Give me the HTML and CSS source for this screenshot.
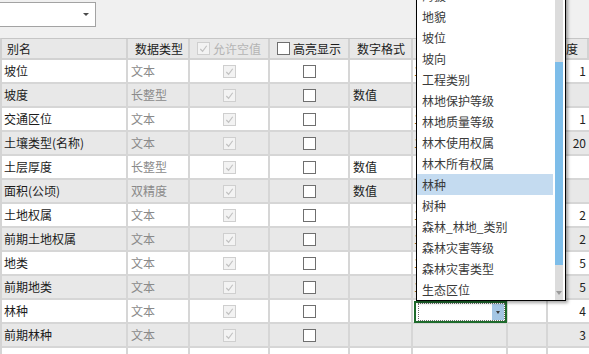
FILE: index.html
```html
<!DOCTYPE html>
<html lang="zh-CN">
<head>
<meta charset="utf-8">
<title>字段设置</title>
<link rel="stylesheet" href="styles.css">
</head>
<body>
<div class="page">
  <div class="toolbar">
    <div class="combo"><span class="combo-arrow"></span></div>
  </div>

  <div class="grid">
    <div class="row head">
      <div class="c">别名</div>
      <div class="c">数据类型</div>
      <div class="c chk-head disabled"><span class="cb cb-dis on"><svg viewBox="0 0 12 12"><polyline points="2.5,6.5 5,9 9.5,3"/></svg></span>允许空值</div>
      <div class="c chk-head"><span class="cb"></span>高亮显示</div>
      <div class="c">数字格式</div>
      <div class="c"></div>
      <div class="c"></div>
      <div class="c last-h">长度</div>
    </div>

    <div class="row white">
      <div class="c name">坡位</div><div class="c type">文本</div>
      <div class="c mid"><span class="cb cb-dis on"><svg viewBox="0 0 12 12"><polyline points="2.5,6.5 5,9 9.5,3"/></svg></span></div>
      <div class="c mid"><span class="cb"></span></div>
      <div class="c"></div><div class="c hid">1</div><div class="c"></div><div class="c num">1</div>
    </div>
    <div class="row gray">
      <div class="c name">坡度</div><div class="c type">长整型</div>
      <div class="c mid"><span class="cb cb-dis on"><svg viewBox="0 0 12 12"><polyline points="2.5,6.5 5,9 9.5,3"/></svg></span></div>
      <div class="c mid"><span class="cb"></span></div>
      <div class="c fmt">数值</div><div class="c hid"></div><div class="c"></div><div class="c num"></div>
    </div>
    <div class="row white">
      <div class="c name">交通区位</div><div class="c type">文本</div>
      <div class="c mid"><span class="cb cb-dis on"><svg viewBox="0 0 12 12"><polyline points="2.5,6.5 5,9 9.5,3"/></svg></span></div>
      <div class="c mid"><span class="cb"></span></div>
      <div class="c"></div><div class="c hid">1</div><div class="c"></div><div class="c num">1</div>
    </div>
    <div class="row gray">
      <div class="c name">土壤类型(名称)</div><div class="c type">文本</div>
      <div class="c mid"><span class="cb cb-dis on"><svg viewBox="0 0 12 12"><polyline points="2.5,6.5 5,9 9.5,3"/></svg></span></div>
      <div class="c mid"><span class="cb"></span></div>
      <div class="c"></div><div class="c hid">1</div><div class="c"></div><div class="c num">20</div>
    </div>
    <div class="row white">
      <div class="c name">土层厚度</div><div class="c type">长整型</div>
      <div class="c mid"><span class="cb cb-dis on"><svg viewBox="0 0 12 12"><polyline points="2.5,6.5 5,9 9.5,3"/></svg></span></div>
      <div class="c mid"><span class="cb"></span></div>
      <div class="c fmt">数值</div><div class="c hid"></div><div class="c"></div><div class="c num"></div>
    </div>
    <div class="row gray">
      <div class="c name">面积(公顷)</div><div class="c type">双精度</div>
      <div class="c mid"><span class="cb cb-dis on"><svg viewBox="0 0 12 12"><polyline points="2.5,6.5 5,9 9.5,3"/></svg></span></div>
      <div class="c mid"><span class="cb"></span></div>
      <div class="c fmt">数值</div><div class="c hid"></div><div class="c"></div><div class="c num"></div>
    </div>
    <div class="row white">
      <div class="c name">土地权属</div><div class="c type">文本</div>
      <div class="c mid"><span class="cb cb-dis on"><svg viewBox="0 0 12 12"><polyline points="2.5,6.5 5,9 9.5,3"/></svg></span></div>
      <div class="c mid"><span class="cb"></span></div>
      <div class="c"></div><div class="c hid">1</div><div class="c"></div><div class="c num">2</div>
    </div>
    <div class="row gray">
      <div class="c name">前期土地权属</div><div class="c type">文本</div>
      <div class="c mid"><span class="cb cb-dis on"><svg viewBox="0 0 12 12"><polyline points="2.5,6.5 5,9 9.5,3"/></svg></span></div>
      <div class="c mid"><span class="cb"></span></div>
      <div class="c"></div><div class="c hid">1</div><div class="c"></div><div class="c num">2</div>
    </div>
    <div class="row white">
      <div class="c name">地类</div><div class="c type">文本</div>
      <div class="c mid"><span class="cb cb-dis on"><svg viewBox="0 0 12 12"><polyline points="2.5,6.5 5,9 9.5,3"/></svg></span></div>
      <div class="c mid"><span class="cb"></span></div>
      <div class="c"></div><div class="c hid">1</div><div class="c"></div><div class="c num">5</div>
    </div>
    <div class="row gray">
      <div class="c name">前期地类</div><div class="c type">文本</div>
      <div class="c mid"><span class="cb cb-dis on"><svg viewBox="0 0 12 12"><polyline points="2.5,6.5 5,9 9.5,3"/></svg></span></div>
      <div class="c mid"><span class="cb"></span></div>
      <div class="c"></div><div class="c hid">1</div><div class="c"></div><div class="c num">5</div>
    </div>
    <div class="row white">
      <div class="c name">林种</div><div class="c type">文本</div>
      <div class="c mid"><span class="cb cb-dis on"><svg viewBox="0 0 12 12"><polyline points="2.5,6.5 5,9 9.5,3"/></svg></span></div>
      <div class="c mid"><span class="cb"></span></div>
      <div class="c"></div>
      <div class="c edit-cell">
        <div class="editor"><div class="editor-inner"><span class="editor-btn"><span class="tri"></span></span></div></div>
      </div>
      <div class="c"></div><div class="c num">4</div>
    </div>
    <div class="row gray">
      <div class="c name">前期林种</div><div class="c type">文本</div>
      <div class="c mid"><span class="cb cb-dis on"><svg viewBox="0 0 12 12"><polyline points="2.5,6.5 5,9 9.5,3"/></svg></span></div>
      <div class="c mid"><span class="cb"></span></div>
      <div class="c"></div><div class="c hid"></div><div class="c"></div><div class="c num">3</div>
    </div>
    <div class="row white">
      <div class="c name"></div><div class="c type"></div><div class="c"></div><div class="c"></div>
      <div class="c"></div><div class="c"></div><div class="c"></div><div class="c"></div>
    </div>
  </div>

  <div class="dropdown">
    <ul class="list">
      <li>海拔</li>
      <li>地貌</li>
      <li>坡位</li>
      <li>坡向</li>
      <li>工程类别</li>
      <li>林地保护等级</li>
      <li>林地质量等级</li>
      <li>林木使用权属</li>
      <li>林木所有权属</li>
      <li class="sel">林种</li>
      <li>树种</li>
      <li>森林_林地_类别</li>
      <li>森林灾害等级</li>
      <li>森林灾害类型</li>
      <li>生态区位</li>
    </ul>
    <div class="scroll">
      <div class="thumb"></div>
      <span class="down"></span>
    </div>
  </div>
</div>
</body>
</html>
```

FILE: styles.css
```css
* { box-sizing: border-box; }

html, body {
  margin: 0;
  padding: 0;
  width: 589px;
  height: 354px;
  overflow: hidden;
  background: #ffffff;
}

.page {
  position: relative;
  width: 589px;
  height: 354px;
  overflow: hidden;
  font-family: "Noto Sans CJK SC", "Microsoft YaHei", "Noto Sans", sans-serif;
  font-size: 12px;
  color: #1b1b1b;
}

/* top toolbar */
.toolbar {
  height: 38px;
  background: #f0f0f0;
  padding-top: 2px;
}

.combo {
  position: relative;
  margin-left: -1px;
  width: 97px;
  height: 25px;
  background: #ffffff;
  border: 1px solid #a3a3a3;
}

.combo-arrow {
  position: absolute;
  right: 6px;
  top: 10px;
  width: 0;
  height: 0;
  border-left: 3px solid transparent;
  border-right: 3px solid transparent;
  border-top: 3px solid #4a4a4a;
}

/* grid */
.grid {
  display: flex;
  flex-direction: column;
}

.row {
  display: grid;
  grid-template-columns: 124px 62px 80px 80px 63px 95px 40px 41px;
  height: 24px;
  padding-left: 2px;
  border-left: 2px solid #d4d4d4;
}

.row.white { background: #ffffff; }
.row.gray { background: #e8e8e8; }

.c {
  height: 24px;
  border-right: 2px solid #d6d6d6;
  border-bottom: 2px solid #d6d6d6;
  padding-left: 3px;
  line-height: 22px;
  white-space: nowrap;
  overflow: hidden;
}

.row .c:first-child { padding-left: 0; margin-left: -2px; padding-left: 2px; }

.c:last-child { border-right: none; }

.row.head {
  height: 22px;
  background: #e8e8e8;
  border-top: 1px solid #c6c6c6;
  border-left: 2px solid #d0d0d0;
}

.head .c {
  height: 21px;
  line-height: 19px;
  padding-left: 7px;
  border-right: 2px solid #d2d2d2;
  border-bottom: 2px solid #d2d2d2;
  color: #1b1b1b;
}

.head .c:first-child { padding-left: 5px; }

.head .last-h { padding-left: 6px; }

.chk-head {
  display: flex;
  align-items: center;
  gap: 3px;
}

.chk-head.disabled { color: #b4b4b4; }

.type { color: #8a8a8a; }

.fmt { color: #1b1b1b; }

.mid {
  display: flex;
  align-items: center;
  justify-content: center;
  padding-left: 0;
}

.num {
  text-align: right;
  padding-right: 3px;
  color: #222222;
}

.hid { padding-left: 1px; color: #7a5a20; }

/* checkboxes */
.cb {
  display: inline-block;
  flex: none;
  width: 13px;
  height: 13px;
  background: #ffffff;
  border: 1px solid #6f6f6f;
}

.cb-dis {
  background: #f3f3f3;
  border-color: #cfcfcf;
}

.cb svg {
  display: block;
  width: 11px;
  height: 11px;
  fill: none;
  stroke: #c2c2c2;
  stroke-width: 1.3;
}

/* in-cell editor */
.edit-cell {
  position: relative;
  overflow: visible;
}

.editor {
  position: absolute;
  left: 1px;
  top: 1px;
  width: 93px;
  height: 22px;
  border: 2px solid #1e6b2c;
  background: #ffffff;
  padding-left: 2px;
}

.editor-inner {
  height: 100%;
  border: 1px dotted #6c6c6c;
  display: flex;
  justify-content: flex-end;
}

.editor-btn {
  width: 12px;
  height: 100%;
  background: #a4c6e4;
  display: flex;
  align-items: center;
  justify-content: center;
}

.tri {
  width: 0;
  height: 0;
  border-left: 2.5px solid transparent;
  border-right: 2.5px solid transparent;
  border-top: 3px solid #3c3c3c;
}

/* dropdown list */
.dropdown {
  position: absolute;
  left: 416px;
  top: -16px;
  width: 150px;
  height: 317px;
  background: #ffffff;
  border: 1px solid #000000;
  box-shadow: 2px 2px 3px rgba(0, 0, 0, 0.35);
  display: flex;
}

.list {
  list-style: none;
  margin: 0;
  padding: 0;
  width: 138px;
}

.list li {
  height: 21px;
  line-height: 21px;
  padding-left: 5px;
  margin-right: 2px;
  color: #3a3a3a;
  white-space: nowrap;
}

.list li.sel {
  background: #c4dbf0;
}

.scroll {
  position: relative;
  width: 8px;
  height: 100%;
  background: #dcdcdc;
}

.thumb {
  position: absolute;
  left: 0;
  top: 77px;
  width: 8px;
  height: 203px;
  background: #7dbde9;
}

.down {
  position: absolute;
  left: 1px;
  bottom: 5px;
  width: 0;
  height: 0;
  border-left: 3px solid transparent;
  border-right: 3px solid transparent;
  border-top: 4px solid #9a9a9a;
}
```
